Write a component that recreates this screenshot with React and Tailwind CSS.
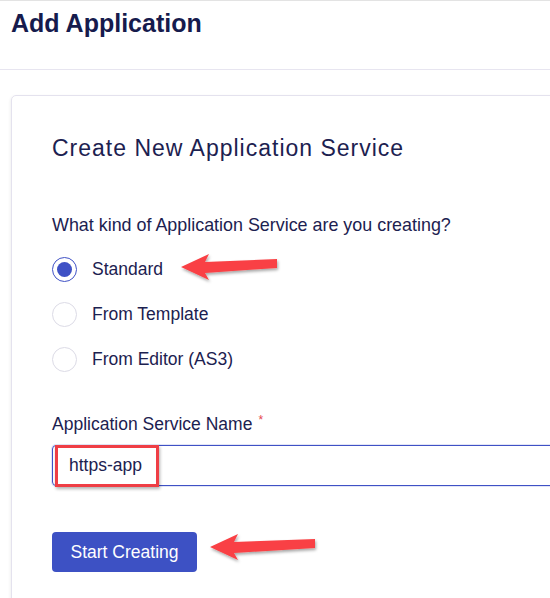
import React from "react";

function Arrow({ className, tail = 100, id }) {
  return (
    <svg className={className} width={tail + 10} height="36" viewBox={`0 0 ${tail + 10} 36`}>
      <defs>
        <filter id={id} x="-20%" y="-40%" width="140%" height="180%">
          <feDropShadow dx="1" dy="2" stdDeviation="1.5" floodColor="#000" floodOpacity="0.35" />
        </filter>
      </defs>
      <polygon
        points={`4,17 32,4 28,12 ${tail},9 ${tail},18 28,23 32,30`}
        fill="#f94144"
        filter={`url(#${id})`}
      />
    </svg>
  );
}

function Radio({ checked, label }) {
  return (
    <div className="flex items-center h-[45px]">
      <div
        className={
          checked
            ? "w-[25px] h-[25px] rounded-full border-[1.5px] border-[#3f51c5] flex items-center justify-center"
            : "w-[25px] h-[25px] rounded-full border border-[#dcdbe6]"
        }
      >
        {checked && <div className="w-[15px] h-[15px] rounded-full bg-[#3f51c5]" />}
      </div>
      <span className="ml-[15px] text-[17.5px] text-[#1c2150]">{label}</span>
    </div>
  );
}

export default function App() {
  return (
    <div
      className="w-[550px] h-[598px] overflow-hidden bg-white border-t border-[#e3e3e3] relative"
      style={{ fontFamily: '"Liberation Sans", Arial, sans-serif' }}
    >
      <div className="h-[69px] border-b border-[#e7e5f0] pl-[11px] pt-[7px]">
        <h1 className="text-[25px] font-bold text-[#161b4d] leading-[30px]">Add Application</h1>
      </div>
      <div className="pl-[11px] pt-[25px]">
        <div className="w-[600px] h-[560px] border border-[#e4e2ee] rounded-[5px] shadow-[-1px_1px_3px_rgba(0,0,0,0.06)] pl-[40px] pt-[37px]">
          <h2 className="text-[23px] text-[#1c2150] tracking-[1px] leading-[30px]">
            Create New Application Service
          </h2>
          <p className="mt-[51px] text-[17.9px] text-[#1c2150] leading-[22px]">
            What kind of Application Service are you creating?
          </p>
          <div className="mt-[11px]">
            <Radio checked label="Standard" />
            <Radio label="From Template" />
            <Radio label="From Editor (AS3)" />
          </div>
          <div className="mt-[31px] text-[17.5px] text-[#1c2150] leading-[22px] flex">
            Application Service Name
            <span className="text-[#e5484d] text-[12px] ml-[6px] leading-[14px]">*</span>
          </div>
          <div className="mt-[10px] h-[41px] w-[560px] border border-[#3f51c5] rounded-l-[4px] flex items-center shadow-[0_0_0_1px_rgba(63,81,197,0.15)] relative">
            <div className="absolute left-[2px] top-[-1px] w-[104px] h-[42px] border-[3px] border-[#ef3e45] shadow-[1px_2px_3px_rgba(0,0,0,0.3)]" />
            <span className="pl-[16px] text-[17.5px] text-[#1c2150]">https-app</span>
          </div>
          <button className="mt-[46px] w-[145px] h-[40px] bg-[#3d51c4] rounded-[4px] text-white text-[17.5px]">
            Start Creating
          </button>
        </div>
      </div>
      <Arrow id="a1" tail={100} className="absolute left-[177px] top-[249px]" />
      <Arrow id="a2" tail={109} className="absolute left-[206px] top-[529px]" />
    </div>
  );
}
